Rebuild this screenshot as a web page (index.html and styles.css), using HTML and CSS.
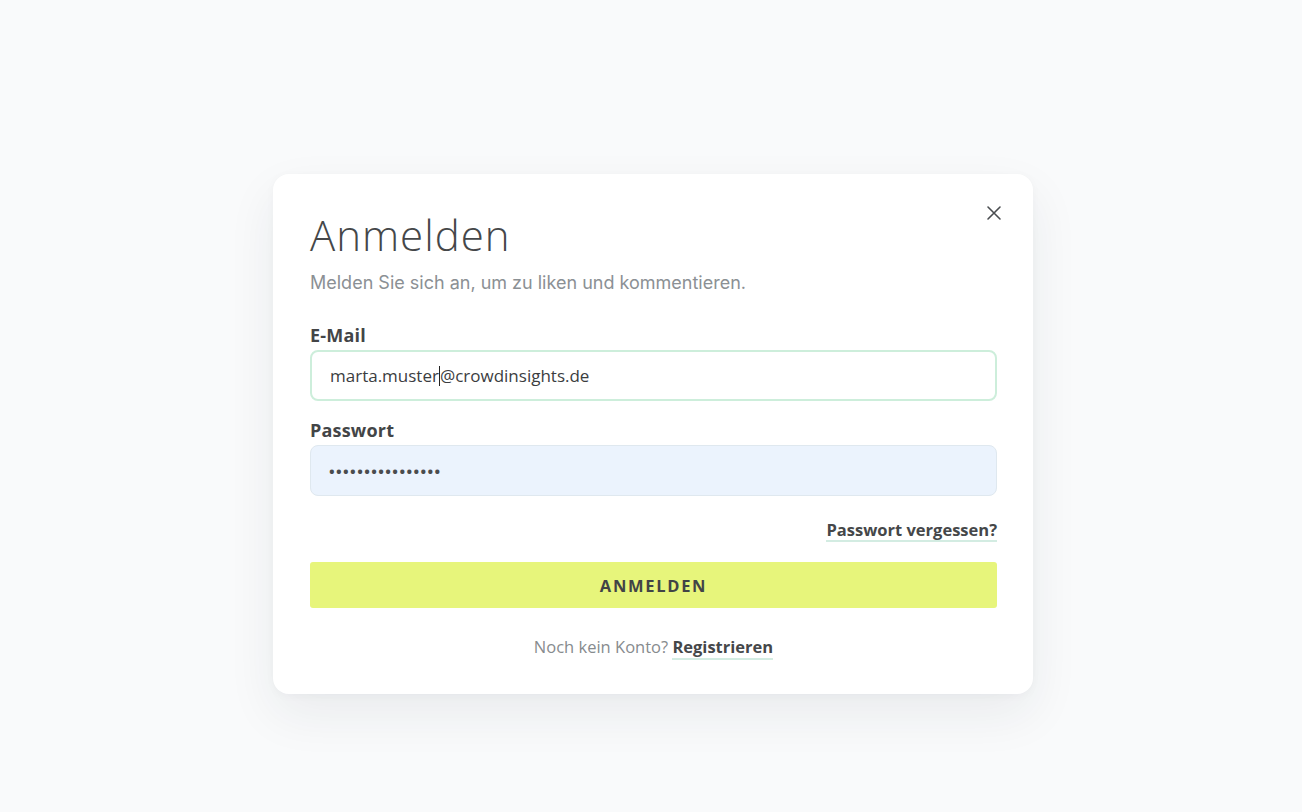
FILE: index.html
```html
<!DOCTYPE html>
<html lang="de">
<head>
<meta charset="utf-8">
<title>Anmelden</title>
<link rel="stylesheet" href="styles.css">
</head>
<body>
<div class="page">
  <div class="modal">
    <button class="close" aria-label="Schließen">
      <svg width="16" height="16" viewBox="0 0 16 16"><path d="M2 2 L14 14 M14 2 L2 14" stroke="#4a4d50" stroke-width="1.6" stroke-linecap="round"/></svg>
    </button>
    <h1 class="title">Anmelden</h1>
    <p class="subtitle">Melden Sie sich an, um zu liken und kommentieren.</p>
    <form class="form">
      <label class="label">E-Mail</label>
      <div class="input input-email"><span>marta.muster</span><span class="caret"></span><span>@crowdinsights.de</span></div>
      <label class="label">Passwort</label>
      <div class="input input-pass">••••••••••••••••</div>
      <div class="forgot-row"><a class="link" href="#">Passwort vergessen?</a></div>
      <button class="submit" type="button">ANMELDEN</button>
      <p class="footer">Noch kein Konto? <a class="link" href="#">Registrieren</a></p>
    </form>
  </div>
</div>
</body>
</html>
```
FILE: styles.css
```css
* { box-sizing: border-box; }
html, body { margin: 0; padding: 0; }
body {
  background: #f9fafb;
  font-family: "Open Sans", "Noto Sans", sans-serif;
  color: #444648;
}
.page {
  width: 1302px;
  height: 812px;
  display: flex;
  justify-content: center;
  padding-top: 174px;
  padding-left: 4px;
}
.modal {
  position: relative;
  width: 760px;
  height: 520px;
  background: #ffffff;
  border-radius: 16px;
  box-shadow: 0 20px 50px rgba(30, 40, 50, 0.07), 0 2px 10px rgba(30, 40, 50, 0.03);
  padding: 37px 36px 0 37px;
}
.close {
  position: absolute;
  top: 31px;
  right: 31px;
  width: 16px;
  height: 16px;
  padding: 0;
  border: 0;
  background: none;
  display: flex;
}
.title {
  margin: 0;
  font-family: "Open Sans", sans-serif;
  font-weight: 300;
  font-size: 42px;
  line-height: 48px;
  color: #454749;
  letter-spacing: 1px;
}
.subtitle {
  margin: 13px 0 0;
  font-family: "Inter", sans-serif;
  font-size: 18px;
  line-height: 22px;
  color: #8b9094;
}
.form {
  display: flex;
  flex-direction: column;
  margin-top: 30px;
}
.label {
  font-family: "Open Sans", sans-serif;
  font-weight: 700;
  font-size: 18px;
  line-height: 22px;
  color: #434547;
  letter-spacing: 0.2px;
}
.input {
  margin-top: 4px;
  height: 51px;
  border-radius: 8px;
  display: flex;
  align-items: center;
  padding: 0 18px;
  font-family: "Open Sans", sans-serif;
  font-size: 17px;
  color: #3b3d3f;
}
.input-email {
  border: 2px solid #cdeedb;
  background: #fff;
}
.caret {
  display: inline-block;
  width: 1px;
  height: 20px;
  background: #222;
}
.input-email + .label { margin-top: 18px; }
.input-pass {
  background: #ebf3fd;
  border: 1px solid #dfe8ef;
  font-size: 15px;
  font-weight: 700;
  letter-spacing: 1.4px;
  color: #4a4c4e;
}
.forgot-row {
  display: flex;
  justify-content: flex-end;
  margin-top: 24px;
  height: 22px;
}
.link {
  font-family: "Open Sans", sans-serif;
  font-weight: 700;
  font-size: 16.5px;
  line-height: 20px;
  color: #454749;
  text-decoration: none;
  border-bottom: 2px solid #d3ece2;
}
.submit {
  margin-top: 20px;
  height: 46px;
  border: 0;
  border-radius: 3px;
  background: #e7f57b;
  font-family: "Open Sans", sans-serif;
  font-weight: 700;
  font-size: 16.5px;
  letter-spacing: 1.7px;
  color: #424446;
}
.footer {
  margin: 28px 0 0;
  text-align: center;
  font-family: "Open Sans", sans-serif;
  font-size: 16.5px;
  line-height: 22px;
  color: #878b8e;
}
.footer .link { font-size: 16.5px; }
```
